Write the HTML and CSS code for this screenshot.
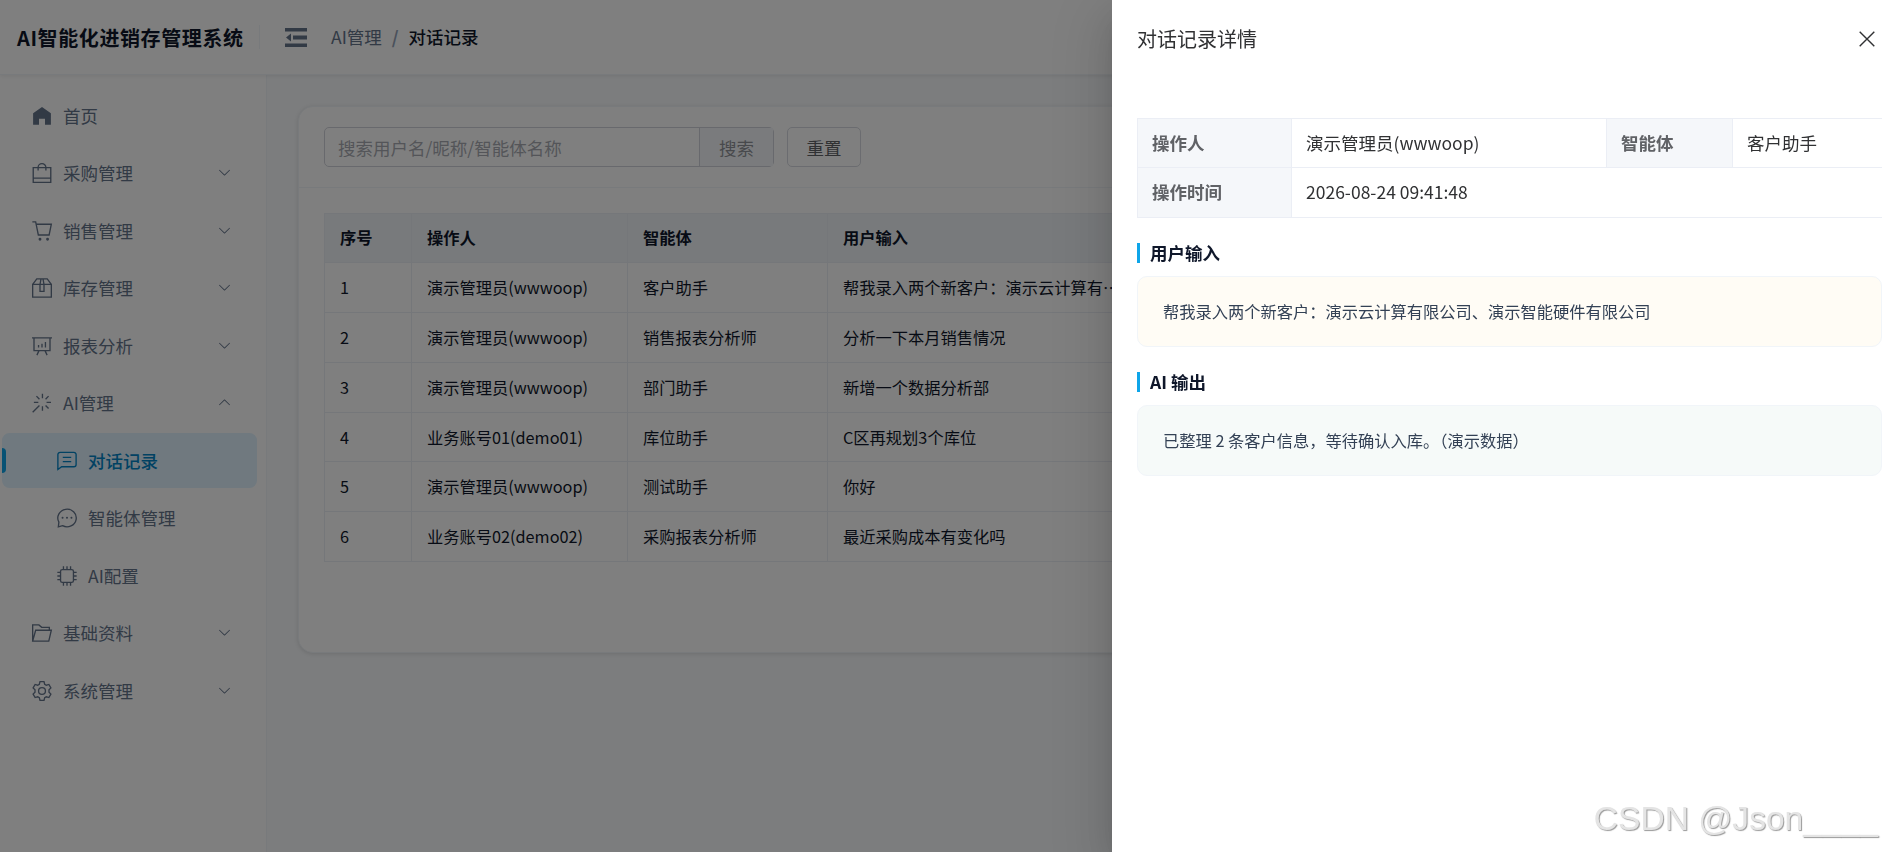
FILE: index.html
```html
<!doctype html>
<html lang="zh-CN">
<head>
    <meta charset="UTF-8">
    <meta name="viewport" content="width=device-width, initial-scale=1.0">
    <title>对话记录 - AI智能化进销存管理系统</title>
    <link rel="stylesheet" href="styles.css">
</head>
<body>
<!-- Arrow shared by the expandable menu items -->
<svg class="symbols" width="0" height="0">
    <symbol id="arrow" viewBox="0 0 1024 1024">
        <path d="M831.872 340.864 512 652.672 192.128 340.864a30.592 30.592 0 0 0-42.752 0 29.12 29.12 0 0 0 0 41.6L489.664 714.24a32 32 0 0 0 44.672 0l340.288-331.712a29.12 29.12 0 0 0 0-41.728 30.592 30.592 0 0 0-42.752 0z"/>
    </symbol>
</svg>
<div class="app">
    <header class="header">
        <div class="logo">AI智能化进销存管理系统</div>
        <svg class="fold" viewBox="0 0 22 19">
            <path d="M0 0h22v3.5H0zM8 7.5h14v4H8zM0 15.5h22V19H0zM6 5.5v8L1 9.5z"/>
        </svg>
        <div class="breadcrumb">
            <span>AI管理</span><i>/</i><b>对话记录</b>
        </div>
    </header>
    <div class="body">
        <nav class="sidebar">
            <div class="item">
                <svg class="icon solid" viewBox="0 0 18 18"><path d="M9 .8 1 6.5V16.8h5.3v-5.3h5.4v5.3H17V6.5z"/></svg>
                <span>首页</span>
            </div>
            <div class="item">
                <svg class="icon" viewBox="0 0 18 18"><path d="M1.1 4.1h15.8v13.3H1.1zM1.1 13.6h15.8M5.5 6.8V4a3.5 3.5 0 0 1 7 0v2.8"/></svg>
                <span>采购管理</span>
                <svg class="arrow"><use href="#arrow"/></svg>
            </div>
            <div class="item">
                <svg class="icon" viewBox="0 0 18 18"><path d="M.3.8h3l2.4 11.8h9.7l2-9.7H3.8"/><circle cx="7.2" cy="16.4" r=".7"/><circle cx="14" cy="16.4" r=".7"/></svg>
                <span>销售管理</span>
                <svg class="arrow"><use href="#arrow"/></svg>
            </div>
            <div class="item">
                <svg class="icon" viewBox="0 0 18 18"><path d="M.6 5.8h16.8v11.4H.6zM.6 5.8l3.7-5h9.4l3.7 5M7.2 5.8v6.3h3.6V5.8L9.9.8H8.1z"/></svg>
                <span>库存管理</span>
                <svg class="arrow"><use href="#arrow"/></svg>
            </div>
            <div class="item">
                <svg class="icon" viewBox="0 0 18 18"><path d="M0 1.7h18M1.8 1.7v11.5h14.4V1.7M6.2 13.4l-1.8 3.8M11.8 13.4l1.8 3.8M5.9 8.2v2.2M9 6.9v3.5M12.1 5.4v5"/></svg>
                <span>报表分析</span>
                <svg class="arrow"><use href="#arrow"/></svg>
            </div>
            <div class="item">
                <svg class="icon" viewBox="0 0 18 18"><path d="M9.4.7v4M9.4 12v4M1.7 8.4h4M13.1 8.4h4M4 2.8l2.7 2.8M14.9 2.8l-2.7 2.8M12.2 11.2l2.7 2.8M6.7 11.2.6 17.3"/></svg>
                <span>AI管理</span>
                <svg class="arrow up"><use href="#arrow"/></svg>
            </div>
            <div class="item sub active">
                <svg class="icon" viewBox="0 0 18 18"><path d="M.8 16.6V3.2A2 2 0 0 1 2.8 1.2h12.4a2 2 0 0 1 2 2v9a2 2 0 0 1-2 2H4.2zM5.2 5.7h7.6M5.2 9.5h7.6"/></svg>
                <span>对话记录</span>
            </div>
            <div class="item sub">
                <svg class="icon" viewBox="0 0 18 18"><path d="M1.2 17 1.7 12.7A8.3 7.9 0 1 1 5 15.9z"/><path class="dots" d="M5 8.7h0M9 8.7h0M13 8.7h0"/></svg>
                <span>智能体管理</span>
            </div>
            <div class="item sub">
                <svg class="icon" viewBox="0 0 18 18"><rect x="3.2" y="3.2" width="11.6" height="11.6" rx="1.6"/><path d="M5.8.3v2.9M9 .3v2.9M12.2.3v2.9M5.8 14.8v2.9M9 14.8v2.9M12.2 14.8v2.9M.3 5.8h2.9M.3 9h2.9M.3 12.2h2.9M14.8 5.8h2.9M14.8 9h2.9M14.8 12.2h2.9"/></svg>
                <span>AI配置</span>
            </div>
            <div class="item">
                <svg class="icon" viewBox="0 0 18 18"><path d="M.6 16.3V1.7h5.6l2.5 2.2h6.9v2.6M.6 16.3 3.3 6.5h14.1l-2.3 9.8z"/></svg>
                <span>基础资料</span>
                <svg class="arrow"><use href="#arrow"/></svg>
            </div>
            <div class="item">
                <svg class="icon" viewBox="0 0 18 18"><path d="M7.2.6h3.6l.6 2.3 1.5.9 2.3-.7 1.8 3.1-1.7 1.7v2.2l1.7 1.7-1.8 3.1-2.3-.7-1.5.9-.6 2.3H7.2l-.6-2.3-1.5-.9-2.3.7L1 11.8l1.7-1.7V7.9L1 6.2l1.8-3.1 2.3.7 1.5-.9z"/><circle cx="9" cy="9" r="3.1"/></svg>
                <span>系统管理</span>
                <svg class="arrow"><use href="#arrow"/></svg>
            </div>
        </nav>
        <main class="main">
            <section class="card">
                <div class="toolbar">
                    <div class="search">
                        <div class="search-input">搜索用户名/昵称/智能体名称</div>
                        <div class="search-btn">搜索</div>
                    </div>
                    <div class="reset">重置</div>
                </div>
                <table class="records">
                    <tr>
                        <th class="col-no">序号</th>
                        <th class="col-user">操作人</th>
                        <th class="col-agent">智能体</th>
                        <th>用户输入</th>
                    </tr>
                    <tr><td>1</td><td>演示管理员(wwwoop)</td><td>客户助手</td><td>帮我录入两个新客户：演示云计算有⋯</td></tr>
                    <tr><td>2</td><td>演示管理员(wwwoop)</td><td>销售报表分析师</td><td>分析一下本月销售情况</td></tr>
                    <tr><td>3</td><td>演示管理员(wwwoop)</td><td>部门助手</td><td>新增一个数据分析部</td></tr>
                    <tr class="short"><td>4</td><td>业务账号01(demo01)</td><td>库位助手</td><td>C区再规划3个库位</td></tr>
                    <tr><td>5</td><td>演示管理员(wwwoop)</td><td>测试助手</td><td>你好</td></tr>
                    <tr><td>6</td><td>业务账号02(demo02)</td><td>采购报表分析师</td><td>最近采购成本有变化吗</td></tr>
                </table>
            </section>
        </main>
    </div>
</div>

<!-- Detail drawer -->
<div class="overlay">
    <aside class="drawer">
        <div class="drawer-header">
            <span>对话记录详情</span>
            <svg class="close" viewBox="0 0 16 16"><path d="M.7.7l14.6 14.6M15.3.7.7 15.3"/></svg>
        </div>
        <table class="desc">
            <tr>
                <th class="desc-label">操作人</th>
                <td class="desc-user">演示管理员(wwwoop)</td>
                <th class="desc-agent">智能体</th>
                <td>客户助手</td>
            </tr>
            <tr class="last">
                <th>操作时间</th>
                <td colspan="3">2026-08-24 09:41:48</td>
            </tr>
        </table>
        <h4>用户输入</h4>
        <div class="box input">帮我录入两个新客户：演示云计算有限公司、演示智能硬件有限公司</div>
        <h4>AI 输出</h4>
        <div class="box output">已整理 2 条客户信息，等待确认入库。（演示数据）</div>
    </aside>
</div>
<div class="watermark">CSDN @Json____</div>
</body>
</html>
```

FILE: styles.css
```css
* {
    box-sizing: border-box;
}

body {
    margin: 0;
    height: 852px;
    overflow: hidden;
    font-family: "Noto Sans CJK SC", sans-serif;
    font-size: 17.5px;
    color: #0f172a;
}

.symbols {
    position: absolute;
}

.app {
    display: flex;
    flex-direction: column;
    height: 852px;
    background: #f8fafc;
}

/* Header */
.header {
    display: flex;
    align-items: center;
    flex: none;
    height: 75px;
    background: #fff;
    border-bottom: 1px solid #f1f5f9;
    box-shadow: 0 1px 4px rgba(0, 0, 0, 0.08);
    z-index: 1;
}

.logo {
    width: 260px;
    height: 24px;
    padding-left: 17px;
    border-right: 1px solid #f1f5f9;
    font-size: 20px;
    line-height: 26px;
    font-weight: 700;
    letter-spacing: 0.6px;
    white-space: nowrap;
}

.fold {
    width: 22px;
    height: 19px;
    margin-left: 25px;
    fill: #64748b;
}

.breadcrumb {
    display: flex;
    margin: 0 0 2px 24px;
    color: #64748b;
}

.breadcrumb i {
    margin: 0 10px;
    font-style: normal;
    font-weight: 700;
    color: #94a3b8;
}

.breadcrumb b {
    font-weight: 500;
    color: #0f172a;
}

.body {
    display: flex;
    flex: 1;
}

/* Sidebar */
.sidebar {
    width: 267px;
    padding: 13px 9px 0 2px;
    background: #fff;
    border-right: 1px solid #f1f5f9;
}

.item {
    display: flex;
    align-items: center;
    height: 55px;
    margin-bottom: 2.5px;
    padding: 0 25px 0 30px;
    color: #64748b;
}

.item span {
    padding-bottom: 1px;
}

.item.sub {
    padding-left: 55px;
}

.item.active {
    position: relative;
    border-radius: 7.5px;
    background: #e0f2fe;
    color: #0284c7;
    font-weight: 500;
}

.item.active::before {
    content: "";
    position: absolute;
    left: 0;
    top: 15px;
    width: 4px;
    height: 25px;
    border-radius: 0 4px 4px 0;
    background: #0ea5e9;
}

.icon {
    width: 20px;
    height: 20px;
    margin-right: 11px;
    overflow: visible;
    fill: none;
    stroke: currentColor;
    stroke-width: 1.2;
}

.icon.solid {
    fill: currentColor;
    stroke: none;
}

.icon .dots {
    stroke-width: 1.8;
    stroke-linecap: round;
}

.arrow {
    width: 15px;
    height: 15px;
    margin: 0 0 1px auto;
    fill: currentColor;
}

.arrow.up {
    transform: rotate(180deg);
}

/* Records */
.main {
    flex: 1;
    padding: 31px 31px 0;
}

.card {
    height: 547px;
    overflow: hidden;
    background: #fff;
    border: 1px solid #f1f5f9;
    border-radius: 15px;
    box-shadow: 0 1px 4px rgba(0, 0, 0, 0.12);
}

.toolbar {
    display: flex;
    height: 81px;
    padding: 20px 25px 0;
    border-bottom: 1px solid #f1f5f9;
}

.search {
    display: flex;
    width: 450px;
    height: 40px;
    border: 1px solid #d0d3da;
    border-radius: 5px;
    line-height: 40px;
}

.search-input {
    flex: 1;
    padding-left: 13px;
    color: #a8abb2;
}

.search-btn {
    width: 74px;
    border-left: 1px solid #d0d3da;
    background: #f5f7fa;
    color: #909399;
    text-align: center;
}

.reset {
    width: 74px;
    height: 40px;
    margin-left: 13px;
    border: 1px solid #d6d9e0;
    border-radius: 5px;
    line-height: 40px;
    text-align: center;
    color: #606266;
}

table {
    border-collapse: separate;
    border-spacing: 0;
    table-layout: fixed;
}

th,
td {
    padding: 0 0 2px 15px;
    text-align: left;
    white-space: nowrap;
}

.records {
    width: 1500px;
    margin: 25px 0 0 25px;
    border-top: 1px solid #ebeef5;
    border-left: 1px solid #ebeef5;
    font-size: 16.25px;
}

.records th,
.records td {
    height: 50px;
    border-right: 1px solid #ebeef5;
    border-bottom: 1px solid #ebeef5;
}

.records th {
    height: 49px;
    background: #f1f5f9;
    font-weight: 700;
}

.records .short td {
    height: 49px;
    padding-bottom: 0;
}

.col-no {
    width: 87px;
}

.col-user {
    width: 216px;
}

.col-agent {
    width: 200px;
}

/* Drawer */
.overlay {
    position: fixed;
    inset: 0;
    z-index: 10;
    background: rgba(0, 0, 0, 0.5);
}

.drawer {
    width: 770px;
    height: 100%;
    margin-left: auto;
    padding: 0 0 0 25px;
    background: #fff;
    box-shadow: 0 20px 60px 20px rgba(0, 0, 0, 0.08),
        0 15px 40px rgba(0, 0, 0, 0.12),
        0 10px 20px -10px rgba(0, 0, 0, 0.16);
}

.drawer-header {
    display: flex;
    justify-content: space-between;
    align-items: center;
    height: 77px;
    padding-right: 7px;
    font-size: 20px;
    color: #303133;
}

.close {
    width: 16px;
    height: 16px;
    fill: none;
    stroke: #303133;
    stroke-width: 1.4;
}

.desc {
    width: 760px;
    margin-top: 41px;
    border-top: 1px solid #ebeef5;
    border-left: 1px solid #ebeef5;
    color: #303133;
}

.desc th,
.desc td {
    height: 49px;
    padding-left: 14px;
    border-right: 1px solid #ebeef5;
    border-bottom: 1px solid #ebeef5;
}

.desc .last th,
.desc .last td {
    height: 50px;
}

.desc th {
    background: #f5f7fa;
    color: #606266;
    font-weight: 700;
}

.desc .desc-label {
    width: 154px;
}

.desc .desc-user {
    width: 315px;
}

.desc .desc-agent {
    width: 126px;
}

h4 {
    height: 20px;
    margin: 25px 0 13px;
    padding-left: 10px;
    border-left: 3px solid #0ea5e9;
    font-size: 17.5px;
    line-height: 20px;
    font-weight: 700;
}

.box {
    height: 71px;
    padding-left: 25px;
    border: 1px solid #f1f5f9;
    border-radius: 10px;
    font-size: 16.25px;
    line-height: 68px;
    color: #334155;
}

.box.input {
    background: #fffcf5;
}

.box.output {
    background: #f6faf9;
}

.watermark {
    position: fixed;
    right: 4px;
    bottom: 11px;
    z-index: 20;
    font-family: "Liberation Sans", sans-serif;
    font-size: 33.6px;
    line-height: 44px;
    color: #e4e4e4;
    text-shadow: 1px 1px 1px #999;
}
```
